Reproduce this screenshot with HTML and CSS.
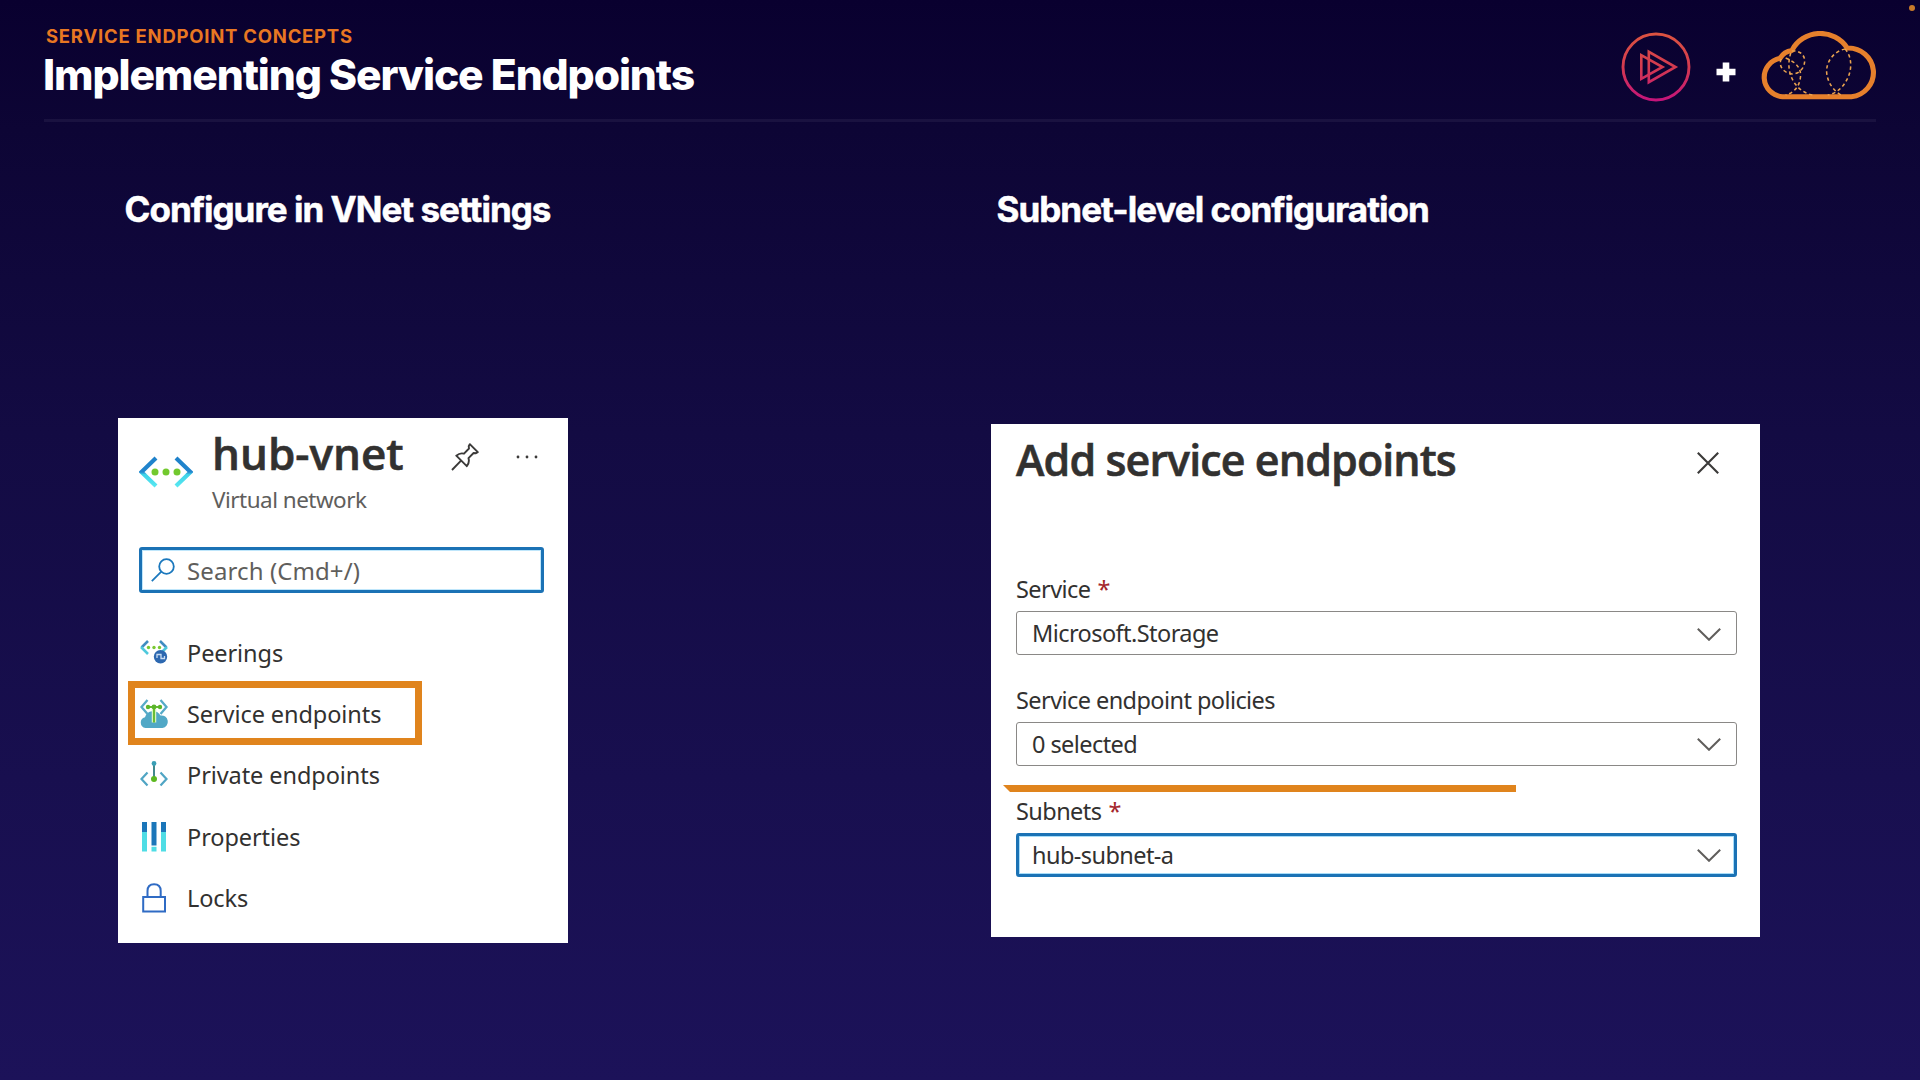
FILE: index.html
```html
<!DOCTYPE html>
<html lang="en">
<head>
<meta charset="utf-8">
<title>Implementing Service Endpoints</title>
<link rel="stylesheet" href="styles.css">
</head>
<body>
<main class="slide">
  <span class="corner-dot"></span>
  <header class="header">
    <div class="titles">
      <div class="eyebrow">SERVICE ENDPOINT CONCEPTS</div>
      <h1 class="title">Implementing Service Endpoints</h1>
    </div>
    <div class="brands">
      <svg class="brand-play" viewBox="0 0 70 70">
        <defs><linearGradient id="gPlay" gradientUnits="userSpaceOnUse" x1="0" y1="0" x2="0" y2="70"><stop offset="0" stop-color="#dc5440"/><stop offset=".5" stop-color="#d43a50"/><stop offset="1" stop-color="#c4127c"/></linearGradient></defs>
        <g fill="none" stroke="url(#gPlay)">
          <circle cx="35" cy="35" r="33" stroke-width="2.9"/>
          <path d="M20.3 23.2V46.8L41.5 35Z" stroke-width="2.6"/>
          <path d="M27.8 19.8V50.2L54.5 35Z" stroke-width="2.6"/>
        </g>
      </svg>
      <svg class="brand-plus" viewBox="0 0 20 20"><path d="M10 .5V19.5M.5 10H19.5" stroke="#fff" stroke-width="6.6"/></svg>
      <svg class="brand-cloud" viewBox="0 0 116 70" preserveAspectRatio="none">
        <g fill="none" stroke="#e6802c">
          <path d="M23 65.800H90A24.500 24.500 0 0 0 86 17A31 31 0 0 0 32 19.500A16 16 0 0 0 20.500 27.300A19.500 19.500 0 0 0 23 65.800Z" stroke-width="5" stroke-linejoin="round"/>
          <g stroke-width="1.500" stroke-dasharray="3.400 2.800" stroke="#eaa34f">
            <path d="M32 20C41 19 47 26 43.500 35C41 42 32 46 25 40C20 36 20 31 22 27"/>
            <path d="M31 22C25 40 34 60 52 64"/>
            <path d="M26 27C36 31 41 37 40.500 45C40 55 34 62 26 64"/>
            <path d="M84 18C73 20 65 31 66 42C67 52 73 60 80 64"/>
            <path d="M84 18C90 25 91 36 87 46C83 55 77 62 67 64"/>
          </g>
        </g>
      </svg>
    </div>
  </header>

  <div class="columns">
    <section class="column">
      <h2 class="heading heading-left">Configure in VNet settings</h2>
      <div class="card card-menu">
        <div class="resource">
          <svg class="resource-icon" viewBox="0 0 54 32">
            <defs><linearGradient id="gNet" gradientUnits="userSpaceOnUse" x1="0" y1="0" x2="0" y2="32"><stop offset="0" stop-color="#1d80c9"/><stop offset=".5" stop-color="#2286ce"/><stop offset=".58" stop-color="#3fd3e8"/><stop offset="1" stop-color="#5beaf2"/></linearGradient></defs>
            <path d="M17 2L2.500 16L17 30M37 2L51.500 16L37 30" fill="none" stroke="url(#gNet)" stroke-width="4.200"/>
            <g fill="#72c92e"><circle cx="16" cy="16" r="3.500"/><circle cx="27" cy="16" r="3.500"/><circle cx="38" cy="16" r="3.500"/></g>
          </svg>
          <div class="resource-text">
            <div class="resource-name">hub-vnet</div>
            <div class="resource-type">Virtual network</div>
          </div>
          <svg class="pin" viewBox="0 0 28 28"><path d="M18.800 1.200L26.800 9.200L25 10.200L22.600 10L17.500 15.200Q18.800 19.500 15.800 23.200L5.300 12.700Q9 9.500 13 10.700L18 5.500L17.700 3.200ZM9.800 17.800L1 27" fill="none" stroke="#3b3a39" stroke-width="1.900" stroke-linejoin="round"/></svg>
          <svg class="more" viewBox="0 0 22 4"><g fill="#3b3a39"><circle cx="2" cy="2" r="1.400"/><circle cx="11" cy="2" r="1.400"/><circle cx="20" cy="2" r="1.400"/></g></svg>
        </div>
        <div class="search">
          <svg class="search-icon" viewBox="0 0 24 24"><g fill="none" stroke="#1b78bd" stroke-width="1.800"><circle cx="15.500" cy="8.500" r="7.300"/><path d="M10.300 13.700L.8 23.200"/></g></svg>
          <span class="search-text">Search (Cmd+/)</span>
        </div>
        <ul class="menu">
          <li class="item">
            <svg class="item-icon" viewBox="0 0 30 30">
              <path d="M9 3L2.500 9.500M21 3L27.500 9.500" fill="none" stroke="#3f8cc0" stroke-width="2.600"/>
              <path d="M2 9L9 16M28 9L22 15" fill="none" stroke="#4fc9dc" stroke-width="2.600"/>
              <g fill="#79c832"><circle cx="9.500" cy="9.500" r="1.700"/><circle cx="15" cy="9.500" r="1.700"/><circle cx="20.500" cy="9.500" r="1.700"/></g>
              <circle cx="21.500" cy="18.800" r="6.700" fill="#2d68b0"/>
              <path d="M18 20V16.500H22V20.500H25.500V18" fill="none" stroke="#c9dcf2" stroke-width="1.300"/>
            </svg>
            <span>Peerings</span>
          </li>
          <li class="item item-marked">
            <svg class="item-icon" viewBox="0 0 30 30">
              <path d="M6.500 29A5.500 5.500 0 0 1 6 18.200A8.500 8.500 0 0 1 21.500 16.500A6 6 0 0 1 23.500 29Z" fill="#51a8c6"/>
              <path d="M8.500 1L2.500 8L8.500 15M21.500 1L27.500 8L21.500 15" fill="none" stroke="#56abc8" stroke-width="2.300"/>
              <path d="M15 8V23.500" stroke="#d7f3bc" stroke-width="4.500"/>
              <path d="M15 8V23.500M9 8H21" stroke="#69bd35" stroke-width="2"/>
              <g fill="#5bb52b"><circle cx="9" cy="8" r="2.200"/><circle cx="15" cy="8" r="2.400"/><circle cx="21" cy="8" r="2.200"/></g>
            </svg>
            <span>Service endpoints</span>
          </li>
          <li class="item">
            <svg class="item-icon" viewBox="0 0 30 30">
              <path d="M8.500 12.500L2.500 19L8.500 25.500M21.500 12.500L27.500 19L21.500 25.500" fill="none" stroke="#50a5c4" stroke-width="2.200"/>
              <path d="M15 3V19" stroke="#43898c" stroke-width="2"/>
              <circle cx="15" cy="3.500" r="2.400" fill="#3b9fb5"/><circle cx="15" cy="19" r="3" fill="#5cb81f"/>
            </svg>
            <span>Private endpoints</span>
          </li>
          <li class="item">
            <svg class="item-icon" viewBox="0 0 30 30">
              <path d="M3 0H8V10H3ZM12.500 0H17.500V23.500H12.500ZM22 0H27V10H22Z" fill="#1b76b9"/>
              <path d="M3 10H8V29.500H3ZM12.500 24.700H17.500V29.500H12.500ZM22 10H27V29.500H22Z" fill="#4fdde5"/>
            </svg>
            <span>Properties</span>
          </li>
          <li class="item">
            <svg class="item-icon" viewBox="0 0 30 30"><g fill="none" stroke="#2f6bc4" stroke-width="2"><rect x="4.200" y="14" width="21.800" height="14.500"/><path d="M8.500 14V8Q8.500 1.200 15.100 1.200T21.700 8V14"/></g></svg>
            <span>Locks</span>
          </li>
        </ul>
      </div>
    </section>

    <section class="column">
      <h2 class="heading heading-right">Subnet-level configuration</h2>
      <div class="card card-form">
        <div class="form-head">
          <div class="form-title">Add service endpoints</div>
          <svg class="close" viewBox="0 0 22 22"><path d="M.8 .8L21.200 21.200M21.200 .8L.8 21.200" stroke="#3b3a39" stroke-width="2.100"/></svg>
        </div>
        <div class="field">
          <div class="label">Service<b class="req">*</b></div>
          <div class="select"><span>Microsoft.Storage</span><svg class="chevron" viewBox="0 0 24 13"><path d="M.8 .8L12 11.800L23.200 .8"/></svg></div>
        </div>
        <div class="field">
          <div class="label">Service endpoint policies</div>
          <div class="select"><span>0 selected</span><svg class="chevron" viewBox="0 0 24 13"><path d="M.8 .8L12 11.800L23.200 .8"/></svg></div>
        </div>
        <div class="field">
          <div class="label">Subnets<b class="req">*</b></div>
          <div class="select select-focus"><span>hub-subnet-a</span><svg class="chevron" viewBox="0 0 24 13"><path d="M.8 .8L12 11.800L23.200 .8"/></svg></div>
        </div>
        <span class="marker"></span>
      </div>
    </section>
  </div>
</main>
</body>
</html>
```
FILE: styles.css
```css
*, *::after { box-sizing: border-box; }

body { margin: 0; background: #0a0030; }

.slide {
  position: relative;
  width: 1920px;
  height: 1080px;
  overflow: hidden;
  background: linear-gradient(#09002f 0%, #0d0535 12%, #130b43 40%, #180f4f 72%, #1c1259 100%);
  color: #fff;
  font-family: Inter, "Liberation Sans", sans-serif;
}

svg { display: block; flex: none; }

.corner-dot {
  position: absolute;
  top: 5px;
  right: 5px;
  width: 6px;
  height: 6px;
  border-radius: 50%;
  background: #c87a2a;
}

.header {
  display: flex;
  justify-content: space-between;
  height: 122px;
  margin: 0 44px;
  padding-top: 23.500px;
  border-bottom: 3px solid #1a1240;
}

.eyebrow {
  padding-left: 2px;
  font-size: 18.500px;
  line-height: 24px;
  font-weight: 700;
  letter-spacing: .76px;
  color: #e87722;
}

.title {
  margin: 3px 0 0 -1px;
  font-size: 42.600px;
  line-height: 48px;
  font-weight: 800;
  letter-spacing: -1.120px;
  white-space: nowrap;
}

.brands { display: flex; align-items: flex-start; }
.brand-play { width: 70px; height: 70px; margin-top: 8px; }
.brand-plus { width: 20px; height: 20px; margin: 38px 23px 0 25px; }
.brand-cloud { width: 119px; height: 70px; margin: 7px -2px 0 0; }

.columns {
  display: grid;
  grid-template-columns: 873px 769px;
  padding: 65px 0 0 118px;
}

.heading {
  margin: 0;
  font-size: 35px;
  line-height: 44px;
  font-weight: 700;
  letter-spacing: -.98px;
  -webkit-text-stroke: .5px #fff;
  white-space: nowrap;
}
.heading-left { padding-left: 6.500px; }
.heading-right { padding-left: 5.500px; }

.card {
  position: relative;
  background: #fff;
  color: #323130;
  font-family: "Noto Sans", "Open Sans", sans-serif;
  font-size: 23.500px;
}

.card-menu {
  width: 450px;
  height: 525px;
  margin-top: 187px;
  padding: 7px 24px 0 21px;
}

.resource { display: flex; height: 122px; }
.resource-icon { width: 54px; height: 32px; margin-top: 31px; }
.resource-text { flex: none; width: 258px; padding-left: 19px; }
.resource-name {
  font-family: "Open Sans", "Noto Sans", sans-serif;
  font-size: 44px;
  line-height: 56px;
  font-weight: 600;
  -webkit-text-stroke: .6px #323130;
  white-space: nowrap;
}
.resource-type { margin-top: 2.500px; line-height: 32px; font-size: 22.500px; letter-spacing: -.52px; color: #605e5c; }
.pin { width: 28px; height: 28px; margin-top: 18px; }
.more { width: 22px; height: 4px; margin: 30px 0 0 37px; }

.search {
  display: flex;
  align-items: center;
  height: 46px;
  padding-left: 9px;
  border: 3px solid #1b72b5;
  border-radius: 3px;
  box-shadow: inset 0 0 0 1px #bfe6fb;
  font-size: 24px;
  letter-spacing: .1px;
  color: #605e5c;
}
.search-icon { width: 24px; height: 24px; margin-right: 12px; }

.menu { margin: 29px 0 0; padding: 0; list-style: none; }
.item { display: flex; align-items: center; position: relative; height: 61.400px; line-height: 32px; letter-spacing: -.08px; white-space: nowrap; }
.item-icon { width: 30px; height: 30px; margin: 0 18px 0 0; }

.item-marked::after {
  content: "";
  position: absolute;
  left: -11px;
  top: -2.400px;
  width: 294px;
  height: 64px;
  border: 7px solid #e0841d;
}

.card-form {
  width: 769px;
  height: 513px;
  margin-top: 193px;
  padding: 8px 23px 0 25px;
  letter-spacing: -.57px;
}

.form-head { display: flex; justify-content: space-between; height: 141px; padding-right: 18px; }
.form-title {
  font-family: "Open Sans", "Noto Sans", sans-serif;
  font-size: 43px;
  line-height: 56px;
  font-weight: 600;
  letter-spacing: -.9px;
  -webkit-text-stroke: .6px #323130;
  white-space: nowrap;
}
.close { width: 22px; height: 22px; margin-top: 20px; }

.field { height: 110.800px; }
.label { height: 38px; line-height: 32px; }
.req { margin-left: 7px; font-weight: 400; color: #a4262c; }

.select {
  display: flex;
  align-items: center;
  justify-content: space-between;
  height: 44px;
  padding: 0 15px;
  border: 1.500px solid #8a8886;
  border-radius: 3px;
}
.select-focus {
  padding: 0 13px;
  border: 3px solid #1b72b5;
  box-shadow: inset 0 0 0 1px #a6dcf8;
}
.chevron { width: 24px; height: 13px; margin-top: 2px; fill: none; stroke: #605e5c; stroke-width: 2; }

.marker {
  position: absolute;
  left: 12px;
  top: 361px;
  width: 513px;
  height: 7px;
  background: #e0841d;
  clip-path: polygon(0 0, 100% 0, 100% 100%, 7px 100%);
}
```
